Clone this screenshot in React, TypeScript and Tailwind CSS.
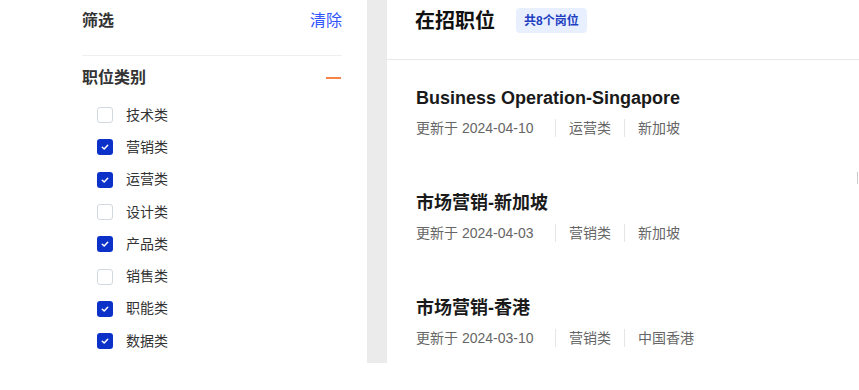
import React from "react";

const cats: [string, boolean][] = [
  ["技术类", false],
  ["营销类", true],
  ["运营类", true],
  ["设计类", false],
  ["产品类", true],
  ["销售类", false],
  ["职能类", true],
  ["数据类", true],
];

const jobs = [
  { title: "Business Operation-Singapore", date: "2024-04-10", cat: "运营类", loc: "新加坡" },
  { title: "市场营销-新加坡", date: "2024-04-03", cat: "营销类", loc: "新加坡" },
  { title: "市场营销-香港", date: "2024-03-10", cat: "营销类", loc: "中国香港" },
];

function Box({ checked }: { checked: boolean }) {
  if (checked) {
    return (
      <span className="w-[16px] h-[16px] rounded-[3px] bg-[#0b31c9] flex items-center justify-center">
        <svg width="10" height="10" viewBox="0 0 10 10" fill="none">
          <path d="M2.3 5.2 L4.2 7 L7.7 3.2" stroke="white" strokeWidth="1.5" strokeLinecap="round" strokeLinejoin="round" />
        </svg>
      </span>
    );
  }
  return <span className="w-[16px] h-[16px] rounded-[3px] border border-[#d3d8e0] bg-white" />;
}

export default function App() {
  return (
    <div
      className="flex h-[363px] bg-white text-[#333]"
      style={{ fontFamily: '"Liberation Sans", "Noto Sans CJK SC", sans-serif' }}
    >
      <div className="w-[367px] shrink-0 pl-[82px] pr-[25px]">
        <div className="h-[41px] flex items-center justify-between">
          <span className="text-[16px] font-semibold text-[#333]">筛选</span>
          <span className="text-[16px] text-[#3355ff]">清除</span>
        </div>
        <div className="mt-[14px] border-t border-[#eeeeee]" />
        <div className="h-[43px] flex items-center justify-between">
          <span className="text-[16px] font-semibold text-[#333]">职位类别</span>
          <span className="w-[15px] h-[2px] bg-[#f5834a] mr-[1px]" />
        </div>
        <div>
          {cats.map(([name, c]) => (
            <div key={name} className="h-[32.3px] flex items-center pl-[15px]">
              <Box checked={c} />
              <span className="ml-[13px] text-[14px] text-[#333]">{name}</span>
            </div>
          ))}
        </div>
      </div>
      <div className="w-[20px] shrink-0 bg-[#ebebeb]" />
      <div className="flex-1 relative">
        <div className="h-[60px] border-b border-[#e8e8e8] pl-[28px]">
          <div className="h-[41px] flex items-center">
            <span className="text-[20px] font-bold text-[#111]">在招职位</span>
            <span className="ml-[21px] h-[25px] px-[8px] rounded-[4px] bg-[#e8f0ff] text-[#1f3fc2] text-[12px] font-bold flex items-center">
              共8个岗位
            </span>
          </div>
        </div>
        {jobs.map((j) => (
          <div key={j.title} className="h-[105px] pt-[27px] pl-[29px]">
            <div className="h-[22px] flex items-center text-[18px] font-bold text-[#1a1a1a]">
              {j.title}
            </div>
            <div className="mt-[9px] h-[20px] flex items-center text-[14px] text-[#666]">
              <span className="w-[139px]">更新于 {j.date}</span>
              <span className="h-[18px] border-l border-[#e6e6e6] pl-[13px] pr-[13px] flex items-center">{j.cat}</span>
              <span className="h-[18px] border-l border-[#e6e6e6] pl-[13px] flex items-center">{j.loc}</span>
            </div>
          </div>
        ))}
        <div className="absolute right-[1px] top-[172px] w-[1px] h-[12px] bg-[#cccccc]" />
      </div>
    </div>
  );
}
